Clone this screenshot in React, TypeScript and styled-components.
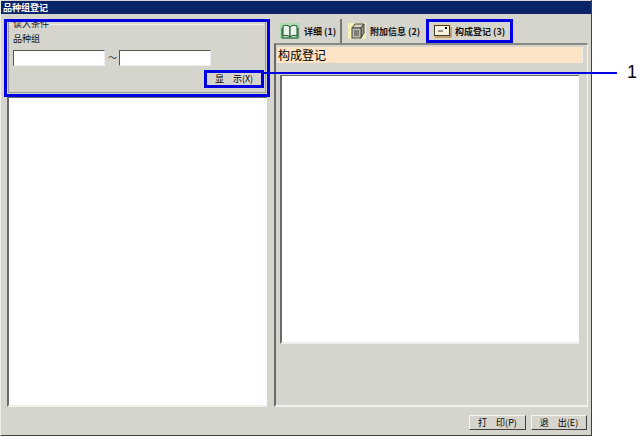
import { ReactNode } from 'react';
import styled, { createGlobalStyle } from 'styled-components';

const FONT = `"Noto Sans CJK SC", "Liberation Sans", sans-serif`;
const BLUE = '#0000e0';
const FACE = '#d6d5cd';

const GlobalStyle = createGlobalStyle`
  html, body {
    margin: 0;
    padding: 0;
    background: #fff;
  }
  body {
    width: 639px;
    height: 437px;
    overflow: hidden;
    font-family: ${FONT};
    font-size: 9px;
    color: #111;
  }
  * {
    box-sizing: border-box;
  }
`;

const Page = styled.div`
  position: relative;
  width: 639px;
  height: 437px;
`;

const Window = styled.div`
  width: 592px;
  height: 436px;
  display: flex;
  flex-direction: column;
  background: ${FACE};
  border-right: 1px solid #404040;
  border-bottom: 1px solid #404040;
  border-left: 1px solid #eeeeea;
`;

const TitleBar = styled.div`
  height: 13px;
  margin-top: 1px;
  padding-left: 2px;
  background: #0a246a;
  color: #fff;
  font-size: 9px;
  font-weight: 700;
  line-height: 13px;
`;

const Body = styled.div`
  display: flex;
  gap: 4px;
  height: 393px;
  padding: 5px 3px 0 3px;
`;

const LeftColumn = styled.div`
  width: 266px;
  display: flex;
  flex-direction: column;
  align-items: flex-start;
`;

/* the blue frame lies over the group box and hides the top of its legend */
const Highlight = styled.div`
  position: relative;
  width: 266px;
  height: 78px;
  padding: 0 4px;

  &::after {
    content: '';
    position: absolute;
    inset: 0;
    border: 3px solid ${BLUE};
    pointer-events: none;
  }
`;

const GroupBox = styled.fieldset`
  height: 74px;
  margin: 0;
  padding: 0 1px 0 4px;
  border: 1px solid #eeeeea;
  outline: 1px solid #9a9a94;
  outline-offset: -1px;
`;

const GroupLegend = styled.legend`
  margin-left: -1px;
  padding: 0 1px;
  font-size: 9px;
  line-height: 10px;
  height: 10px;
`;

const FieldLabel = styled.div`
  font-size: 9px;
  line-height: 12px;
  margin-top: 4px;
`;

const RangeRow = styled.div`
  display: flex;
  align-items: center;
  gap: 3px;
  margin-top: 5px;
`;

const TextBox = styled.div`
  width: 92px;
  height: 16px;
  background: #fff;
  border-top: 1px solid #555;
  border-left: 1px solid #555;
  border-right: 1px solid #eee;
  border-bottom: 1px solid #eee;
`;

const Tilde = styled.span`
  width: 8px;
  font-size: 9px;
  line-height: 10px;
  text-align: center;
  color: #333;
`;

const ShowRow = styled.div`
  display: flex;
  justify-content: flex-end;
  margin-top: 4px;
`;

const PushButton = styled.button<{ $width: number; $marked?: boolean }>`
  width: ${(p) => p.$width}px;
  height: ${(p) => (p.$marked ? 18 : 15)}px;
  padding: 0;
  font-family: ${FONT};
  font-size: 9px;
  line-height: 12px;
  color: #000;
  white-space: pre;
  background: ${FACE};
  border-top: 1px solid #f4f4f0;
  border-left: 1px solid #f4f4f0;
  border-right: 1px solid #404040;
  border-bottom: 1px solid #404040;
  ${(p) => p.$marked && `border: 3px solid ${BLUE};`}
`;

const LeftList = styled.div`
  flex: 1;
  width: 260px;
  margin-left: 3px;
  background: #fff;
  border-left: 2px solid #6a6a66;
  border-top: 1px solid #6a6a66;
  border-bottom: 2px solid #eeeeea;
`;

const RightColumn = styled.div`
  width: 314px;
  display: flex;
  flex-direction: column;
`;

const TabStrip = styled.div`
  height: 24px;
  padding-left: 4px;
  display: flex;
  align-items: stretch;
`;

const Tab = styled.div<{ $width: number; $inset: number; $gap: number; $marked?: boolean; $divider?: boolean }>`
  width: ${(p) => p.$width}px;
  display: flex;
  align-items: center;
  gap: ${(p) => p.$gap}px;
  padding-left: ${(p) => p.$inset}px;
  font-size: 9px;
  font-weight: 700;
  white-space: pre;
  ${(p) => p.$marked && `border: 3px solid ${BLUE};`}
  ${(p) => p.$divider && `border-right: 2px solid #77776f;`}
`;

const TabPanel = styled.div`
  flex: 1;
  display: flex;
  flex-direction: column;
  padding: 2px 0 0 1px;
  border-top: 2px solid #8a8a84;
  border-left: 2px solid #6a6a66;
  border-right: 1px solid #f2f2ee;
  border-bottom: 2px solid #f2f2ee;
`;

const Banner = styled.div`
  width: 306px;
  height: 16px;
  padding-left: 1px;
  background: #fde4c4;
  border-right: 1px solid #eeeeea;
  font-size: 12px;
  line-height: 15px;
  color: #000;
`;

const RightList = styled.div`
  width: 299px;
  height: 269px;
  margin: 12px 0 0 3px;
  background: #fff;
  border-left: 2px solid #6a6a66;
  border-top: 1px solid #6a6a66;
  border-bottom: 2px solid #eeeeea;
`;

const Footer = styled.div`
  flex: 1;
  display: flex;
  justify-content: flex-end;
  gap: 5px;
  padding: 8px 4px 0 0;
`;

const CalloutLine = styled.div`
  position: absolute;
  left: 264px;
  top: 72px;
  width: 353px;
  height: 2px;
  background: ${BLUE};
`;

const CalloutNumber = styled.div`
  position: absolute;
  left: 627px;
  top: 62px;
  font-family: "Liberation Sans", sans-serif;
  font-size: 18px;
  line-height: 20px;
  color: #000;
`;

const IconTile = styled.svg`
  flex: none;
  display: block;
`;

function BookIcon() {
  return (
    <IconTile width="20" height="16" viewBox="0 0 20 16">
      <rect width="20" height="16" fill="#a9dcae" />
      <path d="M3 3c2-1 5-1 7 1v10c-2-2-5-2-7-1z" fill="#e8f5e6" stroke="#1f4a2c" />
      <path d="M17 3c-2-1-5-1-7 1v10c2-2 5-2 7-1z" fill="#e8f5e6" stroke="#1f4a2c" />
      <path d="M2 5v10h16V5" fill="none" stroke="#1f4a2c" />
    </IconTile>
  );
}

function FilesIcon() {
  return (
    <IconTile width="18" height="16" viewBox="0 0 18 16">
      <rect width="18" height="16" fill="#f6efb8" />
      <path d="M4 5l3-4h9l-3 4z" fill="#d8d4bc" stroke="#444" />
      <path d="M13 5l3-4v9l-3 5z" fill="#99978a" stroke="#444" />
      <rect x="4" y="5" width="9" height="10" fill="#bdbba8" stroke="#444" />
      <path d="M6 8h5M6 10h5M6 12h5" stroke="#444" />
    </IconTile>
  );
}

function EnvelopeIcon() {
  return (
    <IconTile width="19" height="15" viewBox="0 0 19 15">
      <rect width="19" height="15" fill="#e8cfa2" />
      <rect x="1.5" y="1.5" width="15" height="10" fill="#f7f1e0" stroke="#3d3a30" />
      <path d="M5 7h5" stroke="#333" />
      <rect x="12" y="3" width="2" height="2" fill="#111" />
      <path d="M2 13h16V3" fill="none" stroke="#8a7650" />
    </IconTile>
  );
}

interface TabItemProps {
  width: number;
  inset: number;
  gap: number;
  icon: ReactNode;
  label: string;
  marked?: boolean;
  divider?: boolean;
}

function TabItem({ width, inset, gap, icon, label, marked, divider }: TabItemProps) {
  return (
    <Tab $width={width} $inset={inset} $gap={gap} $marked={marked} $divider={divider}>
      {icon}
      <span>{label}</span>
    </Tab>
  );
}

export default function App() {
  return (
    <Page>
      <GlobalStyle />
      <Window>
        <TitleBar>品种组登记</TitleBar>
        <Body>
          <LeftColumn>
            <Highlight>
              <GroupBox>
                <GroupLegend>读入条件</GroupLegend>
                <FieldLabel>品种组</FieldLabel>
                <RangeRow>
                  <TextBox />
                  <Tilde>～</Tilde>
                  <TextBox />
                </RangeRow>
                <ShowRow>
                  <PushButton $width={60} $marked>
                    显　示(X)
                  </PushButton>
                </ShowRow>
              </GroupBox>
            </Highlight>
            <LeftList />
          </LeftColumn>
          <RightColumn>
            <TabStrip>
              <TabItem width={64} inset={2} gap={4} icon={<BookIcon />} label="详细 (1)" divider />
              <TabItem width={84} inset={6} gap={4} icon={<FilesIcon />} label="附加信息 (2)" />
              <TabItem width={87} inset={4} gap={3} icon={<EnvelopeIcon />} label="构成登记 (3)" marked />
            </TabStrip>
            <TabPanel>
              <Banner>构成登记</Banner>
              <RightList />
            </TabPanel>
          </RightColumn>
        </Body>
        <Footer>
          <PushButton $width={57}>打　印(P)</PushButton>
          <PushButton $width={56}>退　出(E)</PushButton>
        </Footer>
      </Window>
      <CalloutLine />
      <CalloutNumber>1</CalloutNumber>
    </Page>
  );
}
